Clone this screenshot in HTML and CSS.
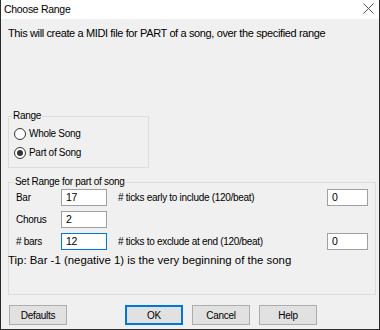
FILE: index.html
```html
<!DOCTYPE html>
<html lang="en">
<head>
    <meta charset="UTF-8">
    <title>Choose Range</title>
    <link rel="stylesheet" href="styles.css">
</head>
<body>
    <div class="window">
        <div class="titlebar">
            <span class="title">Choose Range</span>
            <svg class="close" width="11" height="11" viewBox="0 0 11 11">
                <path d="M0.5 0.5 L10.5 10.5 M10.5 0.5 L0.5 10.5" stroke="#555" stroke-width="1" fill="none"/>
            </svg>
        </div>

        <div class="content">
            <div class="intro">This will create a MIDI file for PART of a song, over the specified range</div>

            <fieldset class="group range-group">
                <legend>Range</legend>
                <label class="radio"><span class="dot"></span>Whole Song</label>
                <label class="radio"><span class="dot checked"></span>Part of Song</label>
            </fieldset>

            <fieldset class="group set-group">
                <legend>Set Range for part of song</legend>
                <div class="row">
                    <span class="lbl">Bar</span>
                    <div class="edit">17</div>
                    <span class="desc"># ticks early to include (120/beat)</span>
                    <div class="edit">0</div>
                </div>
                <div class="row">
                    <span class="lbl">Chorus</span>
                    <div class="edit">2</div>
                </div>
                <div class="row">
                    <span class="lbl"># bars</span>
                    <div class="edit focused">12</div>
                    <span class="desc"># ticks to exclude at end (120/beat)</span>
                    <div class="edit">0</div>
                </div>
                <div class="tip">Tip: Bar -1 (negative 1) is the very beginning of the song</div>
            </fieldset>

            <div class="buttons">
                <button class="btn">Defaults</button>
                <button class="btn default ok">OK</button>
                <button class="btn">Cancel</button>
                <button class="btn">Help</button>
            </div>
        </div>
    </div>
</body>
</html>
```

FILE: styles.css
```css
* {
    margin: 0;
    padding: 0;
    box-sizing: border-box;
}

body {
    font-family: "Liberation Sans", Arial, sans-serif;
    font-size: 10px;
    letter-spacing: -0.3px;
    color: #000;
    background: #fff;
}

.window {
    width: 380px;
    height: 330px;
    background: #f0f0f0;
    border: 1px solid #2b2b2b;
    border-top: none;
    display: flex;
    flex-direction: column;
}

.titlebar {
    height: 19px;
    background: #fff;
    display: flex;
    align-items: center;
    justify-content: space-between;
    padding: 0 5px 2px 3px;
}

.title {
    font-size: 10.5px;
}

.content {
    padding: 0 4px 0 7px;
}

.intro {
    font-size: 11px;
    letter-spacing: -0.37px;
    line-height: 14px;
    margin-top: 7px;
    white-space: nowrap;
}

.group {
    border: 1px solid #dcdcdc;
    padding: 0 7px;
}

.group legend {
    line-height: 14px;
    padding: 0 1px;
    margin-left: -2px;
}

.range-group {
    width: 141px;
    height: 59px;
    margin-top: 69px;
    padding: 0 5px;
}

.radio {
    display: flex;
    align-items: center;
    gap: 3px;
    height: 19px;
}

.radio:first-of-type {
    margin-top: 1px;
}

.dot {
    width: 12px;
    height: 12px;
    border: 1px solid #333;
    border-radius: 50%;
    background: #fff;
    display: flex;
    align-items: center;
    justify-content: center;
}

.dot.checked::after {
    content: "";
    width: 6px;
    height: 6px;
    border-radius: 50%;
    background: #333;
}

.set-group {
    width: 368px;
    height: 120px;
    margin-top: 7px;
}

.row {
    display: grid;
    grid-template-columns: 45px 46px 1fr 41px;
    align-items: center;
    height: 22px;
}

.row:first-of-type {
    margin-top: -3px;
}

.desc {
    padding-left: 11px;
}

.edit {
    height: 17px;
    background: #fff;
    border: 1px solid #a0a0a0;
    padding: 0 4px;
    line-height: 15px;
    font-size: 10.5px;
}

.edit.focused {
    border-color: #0078d7;
}

.tip {
    font-size: 11.4px;
    letter-spacing: 0;
    line-height: 14px;
    margin-top: 1px;
    margin-left: -8px;
    white-space: nowrap;
}

.buttons {
    display: flex;
    gap: 9px;
    margin-top: 10px;
    padding-left: 1px;
}

.btn {
    width: 58px;
    height: 20px;
    background: #e1e1e1;
    border: 1px solid #adadad;
    font-family: inherit;
    font-size: 10px;
    letter-spacing: -0.3px;
    color: #000;
}

.btn.default {
    border: 1px solid #0078d7;
    box-shadow: inset 0 0 0 1px #0078d7;
}

.ok {
    margin-left: 49px;
}
```
